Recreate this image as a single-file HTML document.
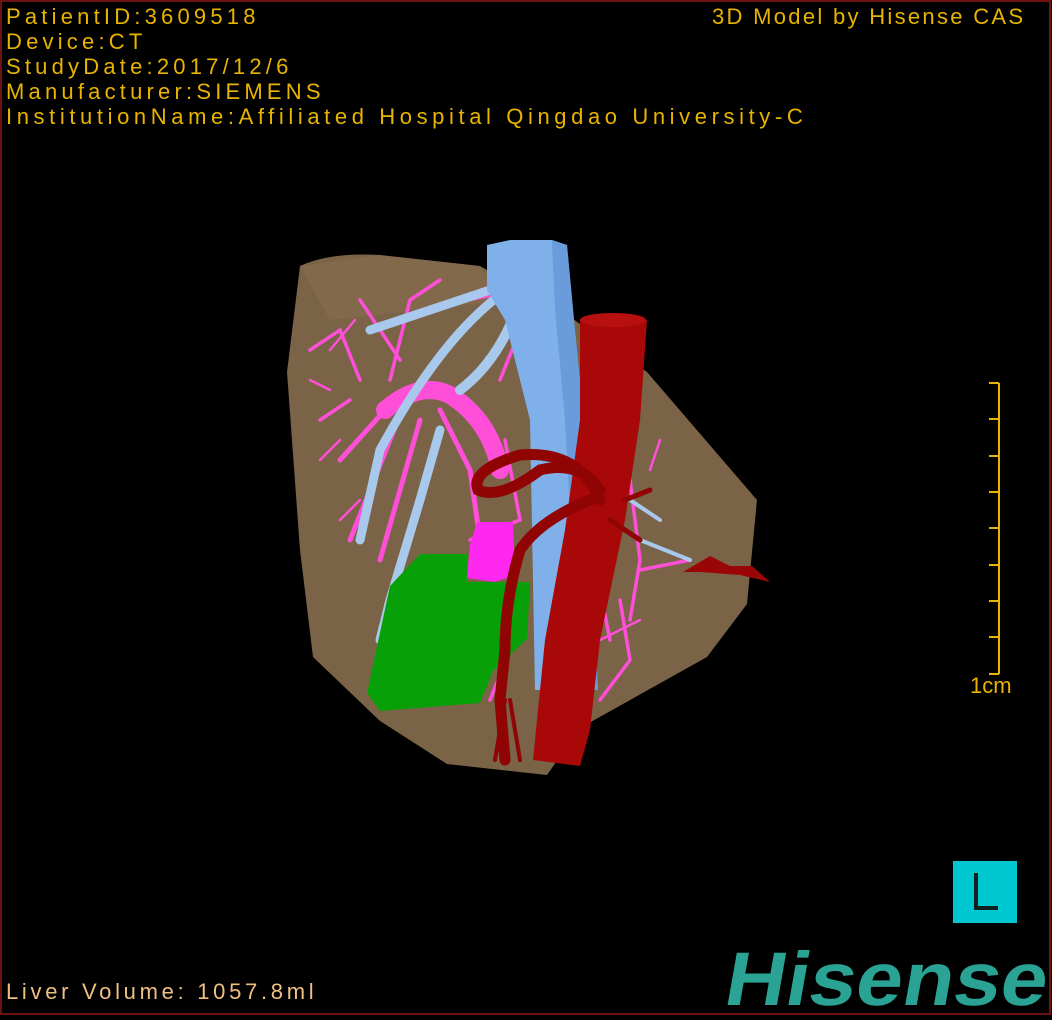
<!DOCTYPE html>
<html><head><meta charset="utf-8"><style>
html,body{margin:0;padding:0;background:#000;width:1052px;height:1020px;overflow:hidden}
#frame{position:absolute;left:0;top:0;width:1047px;height:1011px;border:2px solid #6e1212}
.t{position:absolute;font-family:"Liberation Sans",sans-serif;font-size:22px;color:#e8b400;letter-spacing:4.2px;white-space:nowrap;line-height:25px}
</style></head><body>
<div id="frame"></div>
<div class="t" style="left:6px;top:4px">PatientID:3609518<br>Device:CT<br>StudyDate:2017/12/6<br>Manufacturer:SIEMENS<br><span style="letter-spacing:4.6px">InstitutionName:Affiliated Hospital Qingdao University-C</span></div>
<div class="t" style="left:712px;top:4px;letter-spacing:2.3px">3D Model by Hisense CAS</div>
<div class="t" style="left:6px;top:979px;color:#f0c080;letter-spacing:3.7px">Liver Volume: 1057.8ml</div>
<div class="t" style="left:970px;top:673px;letter-spacing:0">1cm</div>
<svg width="1052" height="1020" style="position:absolute;left:0;top:0">
<g stroke="#e8b400" stroke-width="2">
<line x1="999" y1="383" x2="999" y2="674"/>
<line x1="989" y1="383" x2="999" y2="383"/><line x1="989" y1="419" x2="999" y2="419"/><line x1="989" y1="456" x2="999" y2="456"/><line x1="989" y1="492" x2="999" y2="492"/><line x1="989" y1="528" x2="999" y2="528"/><line x1="989" y1="565" x2="999" y2="565"/><line x1="989" y1="601" x2="999" y2="601"/><line x1="989" y1="637" x2="999" y2="637"/><line x1="989" y1="674" x2="999" y2="674"/>
</g>
<rect x="953" y="861" width="64" height="62" fill="#00c8d0"/>
<path d="M976 873 V908 H998" stroke="#102020" stroke-width="4" fill="none"/>
<text x="0" y="0" transform="translate(722 1005) skewX(-10)" font-family="Liberation Sans,sans-serif" font-weight="bold" font-size="76" fill="#2aa394" textLength="322" lengthAdjust="spacingAndGlyphs">Hisense</text>
<path d="M300 266 Q330 252 380 255 L480 266 L573 319 L647 372 L757 500 L747 604 L707 657 L580 728 L547 775 L447 764 L380 721 L313 657 L300 550 L287 372 Z" fill="#7a6347"/>
<path d="M300 266 L380 255 L480 266 L510 300 L330 320 Z" fill="#8a7050" opacity=".5"/>
<g stroke="#ff4fd8" fill="none" stroke-linecap="round">
<path d="M385 410 Q420 380 450 395 Q490 420 500 470" stroke-width="18"/>
<path d="M385 410 L340 460 M400 415 L350 540 M420 420 L380 560 M440 410 L470 470 L480 540" stroke-width="5"/>
<path d="M360 380 L340 330 L310 350 M350 400 L320 420 M390 380 L410 300 L440 280 M400 360 L360 300 M500 380 L520 330 M505 440 L520 520 L470 540 M630 480 L640 560 L630 620 M640 570 L690 560 M600 590 L610 640 M620 600 L630 660 L600 700 M510 650 L490 700" stroke-width="3.5"/>
<path d="M330 390 L310 380 M340 440 L320 460 M360 500 L340 520 M330 350 L355 320 M470 300 L520 290 M600 640 L640 620 M650 470 L660 440" stroke-width="2.5"/>
</g>
<g stroke="#a8c8ec" fill="none" stroke-linecap="round">
<path d="M505 285 Q430 310 370 330" stroke-width="9"/>
<path d="M500 295 Q440 340 380 450 L360 540" stroke-width="9"/>
<path d="M440 430 L420 500 L390 600 L380 640" stroke-width="9"/>
<path d="M520 300 Q500 360 460 390" stroke-width="10"/>
<path d="M630 500 L660 520 M640 540 L690 560" stroke-width="4"/>
</g>
<path d="M487 245 L510 240 L552 240 L567 245 L575 330 L585 430 L598 690 L535 690 L530 420 L505 320 L487 290 Z" fill="#7fb0ea"/>
<path d="M552 240 L567 245 L575 330 L585 430 L598 690 L580 690 L565 420 L555 310 Z" fill="#5b8fd0" opacity=".6"/>
<path d="M477 522 L513 522 L515 575 L495 582 L467 578 L470 545 Z" fill="#ff28f0"/>
<path d="M367 693 L390 586 L420 554 L467 554 L467 582 L530 582 L527 639 L493 671 L480 703 L380 711 Z" fill="#08a008"/>
<path d="M580 320 Q612 310 647 320 L640 420 L625 520 L600 640 L590 730 L580 766 L533 760 L545 640 L565 530 L580 420 Z" fill="#a80808"/>
<ellipse cx="613" cy="320" rx="33" ry="7" fill="#b81010"/>
<g stroke="#900404" fill="none" stroke-linecap="round">
<path d="M600 500 Q580 450 520 455 Q470 470 478 490 Q500 500 540 470 Q580 460 600 490" stroke-width="11"/>
<path d="M590 500 Q540 520 520 550 Q505 600 505 650 L500 700 L505 760" stroke-width="11"/>
<path d="M505 700 L495 760 M510 700 L520 760" stroke-width="4"/>
<path d="M610 520 L640 540 M625 500 L650 490" stroke-width="5"/>
</g>
<path d="M683 572 L710 556 L730 566 L752 566 L770 582 L740 575 L700 572 Z" fill="#9a0606"/>
</svg>
</body></html>
